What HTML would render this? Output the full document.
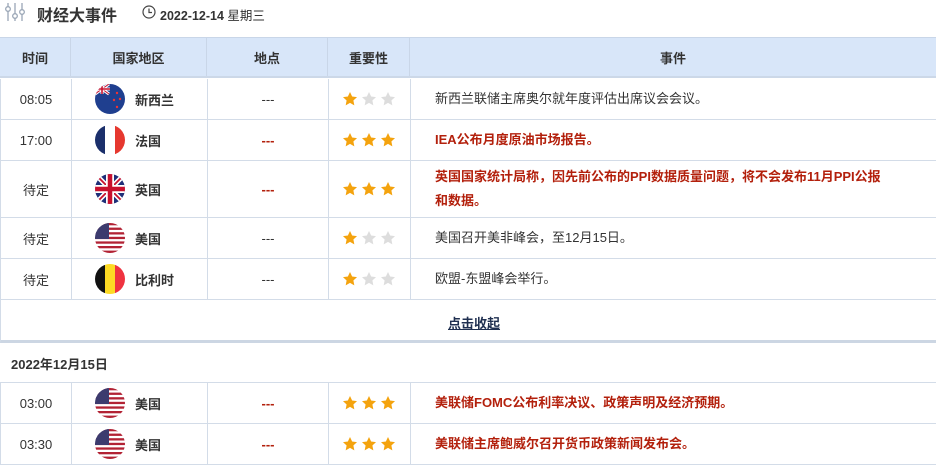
<!DOCTYPE html>
<html><head><meta charset="utf-8"><style>
*{margin:0;padding:0;box-sizing:border-box}
body{width:936px;height:463px;overflow:hidden;background:#fff;font-family:"Liberation Sans","Noto Sans CJK SC",sans-serif;color:#333;position:relative;font-size:13px}
.abs{position:absolute}
.hd{left:0;top:37px;width:936px;height:41px;background:#d8e6f9;border-top:1px solid #c9d6e8;border-bottom:2px solid #ccd8e8}
.row{position:absolute;left:0;width:936px;border-bottom:1px solid #d3dce8;border-left:1px solid #d3dce8}
.c{position:absolute;top:0;height:100%;display:flex;align-items:center;justify-content:center;border-right:1px solid #d3dce8}
.c0{left:0;width:71px}.c1{left:71px;width:136px;justify-content:flex-start;padding-left:23px}.c2{left:207px;width:121px}.c3{left:328px;width:82px}.c4{left:410px;width:526px;justify-content:flex-start;padding-left:24px;border-right:none;line-height:24px}
.hd .c{font-weight:bold;color:#333;justify-content:center;padding:0;border-right:1px solid #c9d6e8}
.name{font-weight:bold;margin-left:10px}
.red{color:#b3200c;font-weight:bold}
.dash{color:#b3200c;font-weight:bold}
.fw{width:30px;height:30px;border-radius:50%;overflow:hidden;display:block;flex:none}
svg.f{width:30px;height:30px;display:block}
</style></head><body>
<svg width="0" height="0" style="position:absolute">
<defs>
<symbol id="star" viewBox="0 0 24 24"><path d="M12 1.5l3.2 6.8 7.3.9-5.4 5 1.4 7.3L12 17.9l-6.5 3.6 1.4-7.3-5.4-5 7.3-.9z"/></symbol>
<symbol id="nz" viewBox="0 0 30 30"><rect width="30" height="30" fill="#1f3f8f"/><path d="M0 0L14 10M14 0L0 10" stroke="#fff" stroke-width="3"/><path d="M0 0L14 10M14 0L0 10" stroke="#c8102e" stroke-width="1"/><path d="M7 0v10M0 5h15" stroke="#fff" stroke-width="3"/><path d="M7 0v10M0 5h15" stroke="#c8102e" stroke-width="1.6"/><circle cx="22" cy="9" r="1.2" fill="#e33"/><circle cx="19" cy="16" r="1.2" fill="#e33"/><circle cx="25" cy="15" r="1.2" fill="#e33"/><circle cx="22" cy="23" r="1.2" fill="#e33"/></symbol>
<symbol id="fr" viewBox="0 0 30 30"><rect width="10" height="30" fill="#1b2f6b"/><rect x="10" width="10" height="30" fill="#fff"/><rect x="20" width="10" height="30" fill="#e6382f"/></symbol>
<symbol id="uk" viewBox="0 0 30 30"><rect width="30" height="30" fill="#1f2f78"/><path d="M0 0L30 30M30 0L0 30" stroke="#fff" stroke-width="5"/><path d="M0 0L30 30M30 0L0 30" stroke="#c8102e" stroke-width="1.8"/><path d="M15 0v30M0 15h30" stroke="#fff" stroke-width="8"/><path d="M15 0v30M0 15h30" stroke="#c8102e" stroke-width="4.5"/></symbol>
<symbol id="us" viewBox="0 0 30 30"><rect width="30" height="30" fill="#fff"/><g fill="#b22234"><rect y="0" width="30" height="2.3"/><rect y="4.6" width="30" height="2.3"/><rect y="9.2" width="30" height="2.3"/><rect y="13.8" width="30" height="2.3"/><rect y="18.4" width="30" height="2.3"/><rect y="23" width="30" height="2.3"/><rect y="27.6" width="30" height="2.4"/></g><rect width="14" height="16" fill="#3c3b6e"/></symbol>
<symbol id="be" viewBox="0 0 30 30"><rect width="10" height="30" fill="#111"/><rect x="10" width="10" height="30" fill="#fdda24"/><rect x="20" width="10" height="30" fill="#ef3340"/></symbol>
</defs></svg>

<svg class="abs" style="left:4px;top:2px" width="22" height="20" viewBox="0 0 22 20"><g stroke="#9aa6b6" stroke-width="1.3" fill="none"><path d="M4 1v18M11 1v18M18 1v18"/><circle cx="4" cy="7" r="2.3" fill="#fff"/><circle cx="11" cy="14" r="2.3" fill="#fff"/><circle cx="18" cy="10" r="2.3" fill="#fff"/></g></svg>
<div class="abs" style="left:37px;top:2px;font-size:16px;font-weight:bold;color:#333">财经大事件</div>
<svg class="abs" style="left:142px;top:5px" width="14" height="14" viewBox="0 0 14 14"><circle cx="7" cy="7" r="6" fill="none" stroke="#444" stroke-width="1.2"/><path d="M7 3.5V7.5H10" fill="none" stroke="#444" stroke-width="1.2"/></svg>
<div class="abs" style="left:160px;top:5px;font-size:12.5px;font-weight:bold;color:#333">2022-12-14 <span style="font-weight:normal">星期三</span></div>

<div class="abs hd">
<div class="c c0">时间</div><div class="c c1" style="left:71px;width:136px">国家地区</div><div class="c c2">地点</div><div class="c c3">重要性</div><div class="c c4" style="justify-content:center;padding:0;border-right:none;line-height:normal">事件</div>
</div>

<div class="row" style="top:79px;height:41px">
<div class="c c0">08:05</div><div class="c c1"><span class="fw"><svg class="f"><use href="#nz"/></svg></span><span class="name">新西兰</span></div><div class="c c2">---</div>
<div class="c c3"><svg width="56" height="16"><use href="#star" x="0" width="16" height="16" fill="#f4a30e"/><use href="#star" x="19" width="16" height="16" fill="#ddd"/><use href="#star" x="38" width="16" height="16" fill="#ddd"/></svg></div>
<div class="c c4">新西兰联储主席奥尔就年度评估出席议会会议。</div></div>

<div class="row" style="top:120px;height:41px">
<div class="c c0">17:00</div><div class="c c1"><span class="fw"><svg class="f"><use href="#fr"/></svg></span><span class="name">法国</span></div><div class="c c2 dash">---</div>
<div class="c c3"><svg width="56" height="16"><use href="#star" x="0" width="16" height="16" fill="#f4a30e"/><use href="#star" x="19" width="16" height="16" fill="#f4a30e"/><use href="#star" x="38" width="16" height="16" fill="#f4a30e"/></svg></div>
<div class="c c4 red">IEA公布月度原油市场报告。</div></div>

<div class="row" style="top:161px;height:57px">
<div class="c c0">待定</div><div class="c c1"><span class="fw"><svg class="f"><use href="#uk"/></svg></span><span class="name">英国</span></div><div class="c c2 dash">---</div>
<div class="c c3"><svg width="56" height="16"><use href="#star" x="0" width="16" height="16" fill="#f4a30e"/><use href="#star" x="19" width="16" height="16" fill="#f4a30e"/><use href="#star" x="38" width="16" height="16" fill="#f4a30e"/></svg></div>
<div class="c c4 red" style="padding-right:10px">英国国家统计局称，因先前公布的PPI数据质量问题，将不会发布11月PPI公报<br>和数据。</div></div>

<div class="row" style="top:218px;height:41px">
<div class="c c0">待定</div><div class="c c1"><span class="fw"><svg class="f"><use href="#us"/></svg></span><span class="name">美国</span></div><div class="c c2">---</div>
<div class="c c3"><svg width="56" height="16"><use href="#star" x="0" width="16" height="16" fill="#f4a30e"/><use href="#star" x="19" width="16" height="16" fill="#ddd"/><use href="#star" x="38" width="16" height="16" fill="#ddd"/></svg></div>
<div class="c c4">美国召开美非峰会，至12月15日。</div></div>

<div class="row" style="top:259px;height:41px">
<div class="c c0">待定</div><div class="c c1"><span class="fw"><svg class="f"><use href="#be"/></svg></span><span class="name">比利时</span></div><div class="c c2">---</div>
<div class="c c3"><svg width="56" height="16"><use href="#star" x="0" width="16" height="16" fill="#f4a30e"/><use href="#star" x="19" width="16" height="16" fill="#ddd"/><use href="#star" x="38" width="16" height="16" fill="#ddd"/></svg></div>
<div class="c c4">欧盟-东盟峰会举行。</div></div>

<div class="row" style="top:300px;height:43px;border-bottom:3px solid #ccd6e3">
<div class="abs" style="left:447px;top:13px;font-weight:bold;text-decoration:underline;color:#1f2f50">点击收起</div></div>

<div class="row" style="top:343px;height:40px;border-left:none">
<div class="abs" style="left:11px;top:11px;font-weight:bold">2022年12月15日</div></div>

<div class="row" style="top:383px;height:41px">
<div class="c c0">03:00</div><div class="c c1"><span class="fw"><svg class="f"><use href="#us"/></svg></span><span class="name">美国</span></div><div class="c c2 dash">---</div>
<div class="c c3"><svg width="56" height="16"><use href="#star" x="0" width="16" height="16" fill="#f4a30e"/><use href="#star" x="19" width="16" height="16" fill="#f4a30e"/><use href="#star" x="38" width="16" height="16" fill="#f4a30e"/></svg></div>
<div class="c c4 red">美联储FOMC公布利率决议、政策声明及经济预期。</div></div>

<div class="row" style="top:424px;height:41px">
<div class="c c0">03:30</div><div class="c c1"><span class="fw"><svg class="f"><use href="#us"/></svg></span><span class="name">美国</span></div><div class="c c2 dash">---</div>
<div class="c c3"><svg width="56" height="16"><use href="#star" x="0" width="16" height="16" fill="#f4a30e"/><use href="#star" x="19" width="16" height="16" fill="#f4a30e"/><use href="#star" x="38" width="16" height="16" fill="#f4a30e"/></svg></div>
<div class="c c4 red">美联储主席鲍威尔召开货币政策新闻发布会。</div></div>
</body></html>
